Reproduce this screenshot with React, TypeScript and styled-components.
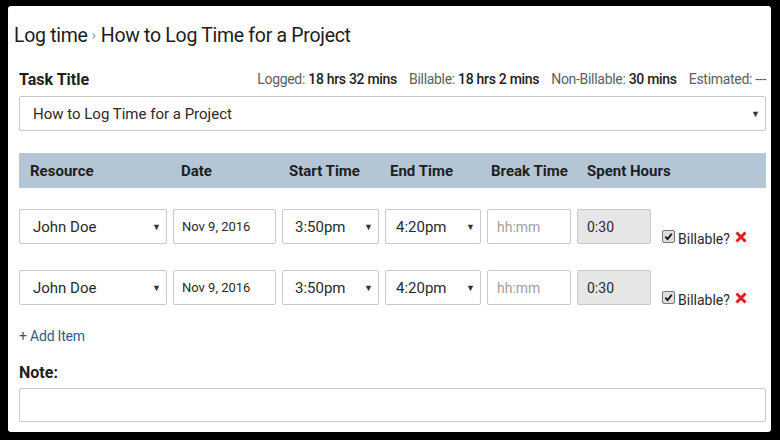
import React from 'react';
import styled, { createGlobalStyle } from 'styled-components';

const Global = createGlobalStyle`
  html, body {
    margin: 0;
    padding: 0;
    background: #000;
    font-family: Roboto, "Liberation Sans", Arial, sans-serif;
  }
`;

const Page = styled.div`
  width: 780px;
  height: 440px;
  padding: 6px 9px 8px 8px;
  box-sizing: border-box;
  background: #000;
`;

const Panel = styled.div`
  height: 100%;
  box-sizing: border-box;
  background: #fff;
  border-radius: 3px;
  padding: 0 5px 0 11px;
  display: flex;
  flex-direction: column;
  color: #222;
`;

const Breadcrumb = styled.div`
  margin: 18px 0 0 -5px;
  height: 22px;
  display: flex;
  align-items: center;
  font-size: 19.5px;
  letter-spacing: -0.3px;
  color: #1c1c1c;
`;

const Sep = styled.span`
  color: #999;
  font-size: 15px;
  margin: 0 5px 0 4px;
`;

const TitleRow = styled.div`
  margin-top: 23px;
  height: 20px;
  display: flex;
  align-items: center;
  justify-content: space-between;
`;

const Label = styled.div`
  font-size: 16px;
  font-weight: 700;
  color: #1e1e1e;
`;

const Stats = styled.div`
  display: flex;
  gap: 12px;
  font-size: 14px;
  color: #5e5e5e;
  letter-spacing: -0.3px;
`;

const StatValue = styled.b`
  color: #222;
  font-weight: 500;
`;

const Field = styled.div<{ $gray?: boolean; $pad?: number; $size?: number }>`
  position: relative;
  box-sizing: border-box;
  height: 35px;
  border: 1px solid #c9c9c9;
  border-radius: 2px;
  background: ${(p) => (p.$gray ? '#e6e6e6' : '#fff')};
  display: flex;
  align-items: center;
  padding-left: ${(p) => p.$pad ?? 12}px;
  font-size: ${(p) => p.$size ?? 15}px;
  color: #2a2a2a;
`;

const Arrow = styled.span`
  position: absolute;
  right: 5px;
  top: 50%;
  transform: translateY(-50%);
  font-size: 9px;
  color: #333;
`;

const Placeholder = styled.span`
  color: #a0a0a0;
`;

const Grid = styled.div`
  display: grid;
  grid-template-columns: 148px 103px 97px 96px 84px 74px 1fr;
  column-gap: 6px;
`;

const HeaderBar = styled(Grid)`
  margin-top: 22px;
  height: 35px;
  background: #b4c5d6;
  align-items: center;
  font-size: 15px;
  font-weight: 700;
  color: #1e1e1e;
  white-space: nowrap;
`;

const HeadCell = styled.div<{ $pad: number }>`
  padding-left: ${(p) => p.$pad}px;
`;

const Row = styled(Grid)<{ $top: number }>`
  margin-top: ${(p) => p.$top}px;
`;

const BillCell = styled.div`
  display: flex;
  align-items: flex-end;
  padding-left: 5px;
  margin-bottom: -3px;
  font-size: 14px;
  color: #2a2a2a;
  gap: 3px;
  white-space: nowrap;
`;

const Check = styled.span`
  width: 11px;
  height: 11px;
  border: 1px solid #777;
  border-radius: 2px;
  background: #ddd;
  display: inline-flex;
  align-items: center;
  justify-content: center;
  margin-bottom: 4px;
`;

const Remove = styled.svg`
  margin: 0 0 4px 2px;
`;

const AddLink = styled.a`
  margin-top: 23px;
  font-size: 14px;
  color: #2b5d8c;
  text-decoration: none;
  height: 16px;
  line-height: 16px;
  letter-spacing: -0.2px;
`;

const NoteLabel = styled(Label)`
  margin-top: 19px;
`;

const NoteInput = styled(Field)`
  margin-top: 6px;
  height: 34px;
`;

const Row1 = ({ top }: { top: number }) => (
  <Row $top={top}>
    <Field $pad={13}>John Doe<Arrow>▼</Arrow></Field>
    <Field $pad={8} $size={13}>Nov 9, 2016</Field>
    <Field $pad={12}>3:50pm<Arrow>▼</Arrow></Field>
    <Field $pad={10}>4:20pm<Arrow>▼</Arrow></Field>
    <Field $pad={9} $size={14}><Placeholder>hh:mm</Placeholder></Field>
    <Field $pad={9} $size={14} $gray>0:30</Field>
    <BillCell>
      <Check>
        <svg width="9" height="9" viewBox="0 0 10 10">
          <path d="M1.5 5.2 L4 7.8 L8.6 2" fill="none" stroke="#111" strokeWidth="2" />
        </svg>
      </Check>
      Billable?
      <Remove width="12" height="12" viewBox="0 0 12 12">
        <path d="M1.5 1.5 L10.5 10.5 M10.5 1.5 L1.5 10.5" stroke="#e01f1f" strokeWidth="3" />
      </Remove>
    </BillCell>
  </Row>
);

export default function App() {
  return (
    <>
      <Global />
      <Page>
        <Panel>
          <Breadcrumb>
            Log time<Sep>›</Sep>How to Log Time for a Project
          </Breadcrumb>
          <TitleRow>
            <Label>Task Title</Label>
            <Stats>
              <span>Logged: <StatValue>18 hrs 32 mins</StatValue></span>
              <span>Billable: <StatValue>18 hrs 2 mins</StatValue></span>
              <span>Non-Billable: <StatValue>30 mins</StatValue></span>
              <span>Estimated: ---</span>
            </Stats>
          </TitleRow>
          <Field $pad={13} style={{ marginTop: 7 }}>
            How to Log Time for a Project<Arrow>▼</Arrow>
          </Field>
          <HeaderBar>
            <HeadCell $pad={11}>Resource</HeadCell>
            <HeadCell $pad={8}>Date</HeadCell>
            <HeadCell $pad={7}>Start Time</HeadCell>
            <HeadCell $pad={5}>End Time</HeadCell>
            <HeadCell $pad={4}>Break Time</HeadCell>
            <HeadCell $pad={10}>Spent Hours</HeadCell>
            <div />
          </HeaderBar>
          <Row1 top={21} />
          <Row1 top={26} />
          <AddLink href="#">+ Add Item</AddLink>
          <NoteLabel>Note:</NoteLabel>
          <NoteInput />
        </Panel>
      </Page>
    </>
  );
}
